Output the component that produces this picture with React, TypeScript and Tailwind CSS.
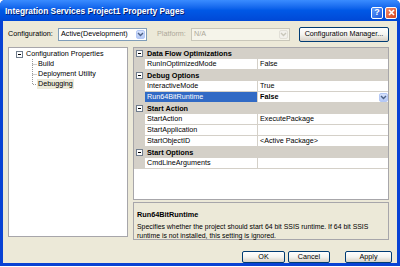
import React from "react";

const font = "font-['Liberation_Sans',Arial,sans-serif]";

function Chevron({ color = "#4D6185" }: { color?: string }) {
  return (
    <svg width="7" height="5" viewBox="0 0 7 5">
      <path d="M1 1 L3.5 3.5 L6 1" fill="none" stroke={color} strokeWidth="1.4" />
    </svg>
  );
}

function ComboArrow({ disabled = false }: { disabled?: boolean }) {
  return (
    <div
      className={
        "w-[9px] h-full flex items-center justify-center rounded-[2px] border " +
        (disabled
          ? "bg-[#F2F1EC] border-[#E2E0D8]"
          : "bg-gradient-to-b from-[#D8E3FC] to-[#B4C8F6] border-[#B4C8F6]")
      }
    >
      <Chevron color={disabled ? "#C9C7BA" : "#4D6185"} />
    </div>
  );
}

function XPButton({ children, w }: { children: React.ReactNode; w: string }) {
  return (
    <div
      className={
        w +
        " shrink-0 h-full flex items-center justify-center rounded-[2px] border border-[#003C74] bg-gradient-to-b from-[#FFFFFF] via-[#F4F4F0] to-[#D6D0C5] text-black"
      }
    >
      {children}
    </div>
  );
}

function MinusBox() {
  return (
    <svg width="7" height="7" viewBox="0 0 7 7" className="shrink-0">
      <rect x="0.5" y="0.5" width="6" height="6" fill="#fff" stroke="#6F7C8C" />
      <path d="M2 3.5 H5" stroke="#000" strokeWidth="1" />
    </svg>
  );
}

function TreeConnector({ last = false }: { last?: boolean }) {
  return (
    <svg width="5" height="10" viewBox="0 0 5 10" className="shrink-0">
      <path
        d={last ? "M0.5 0 V5.5 H5" : "M0.5 0 V10 M0.5 5.5 H5"}
        fill="none"
        stroke="#9A9A9A"
        strokeDasharray="1 1"
      />
    </svg>
  );
}

function CategoryRow({ label }: { label: string }) {
  return (
    <div className="h-[11px] flex items-center bg-[#D4D0C8]">
      <div className="w-[11px] flex justify-center">
        <MinusBox />
      </div>
      <span className="pl-[2px] font-bold text-[7.3px] text-black">{label}</span>
    </div>
  );
}

function PropRow({
  name,
  value,
  selected = false,
}: {
  name: string;
  value: string;
  selected?: boolean;
}) {
  return (
    <div className="h-[11px] flex">
      <div className="w-[11px] bg-[#D4D0C8]" />
      <div
        className={
          "w-[113px] flex items-center pl-[2px] border-r border-b border-[#D4D0C8] " +
          (selected ? "bg-[#316AC5] text-white" : "bg-white text-black")
        }
      >
        {name}
      </div>
      <div
        className={
          "flex-1 flex items-center justify-between pl-[2px] border-b border-[#D4D0C8] bg-white " +
          (selected ? "font-bold" : "")
        }
      >
        <span>{value}</span>
        {selected && (
          <div className="w-[8px] h-[9px] mr-[1px]">
            <ComboArrow />
          </div>
        )}
      </div>
    </div>
  );
}

export default function App() {
  return (
    <div className={"w-[400px] h-[267px] bg-white overflow-hidden text-[7.2px] leading-none " + font}>
      <div className="h-[266px] flex flex-col bg-[#0842D4] rounded-t-[5px]">
        {/* Title bar */}
        <div className="h-[21px] shrink-0 flex items-center pl-[5px] pr-[3px] rounded-t-[5px] bg-gradient-to-b from-[#3A8CFF] via-[#0058E6] to-[#0048D6]">
          <span className="font-bold text-[8.4px] text-white pt-[1px] [text-shadow:1px_1px_0_#0A1E6E]">
            Integration Services Project1 Property Pages
          </span>
          <div className="ml-auto flex gap-[2px] pt-[4px]">
            <div className="w-[12px] h-[12px] rounded-[2px] border border-white bg-gradient-to-br from-[#5E9BFF] to-[#1C55D8] flex items-center justify-center text-white font-bold text-[9px]">
              ?
            </div>
            <div className="w-[12px] h-[12px] rounded-[2px] border border-white bg-gradient-to-br from-[#F08A6A] to-[#D5421A] flex items-center justify-center">
              <svg width="7" height="7" viewBox="0 0 7 7">
                <path d="M1 1 L6 6 M6 1 L1 6" stroke="#fff" strokeWidth="1.6" />
              </svg>
            </div>
          </div>
        </div>

        {/* Body */}
        <div className="flex-1 mx-[3px] mb-[3px] bg-[#ECE9D8] flex flex-col pl-[5px] pt-[6px]">
          {/* Config row */}
          <div className="h-[14px] flex items-center">
            <span className="w-[50px] text-black">Configuration:</span>
            <div className="w-[89px] h-[13px] flex items-center bg-white border border-[#7F9DB9] pl-[2px] pr-[1px] py-[1px]">
              <span className="flex-1 text-black">Active(Development)</span>
              <ComboArrow />
            </div>
            <span className="ml-[10px] w-[34px] text-[#ACA899]">Platform:</span>
            <div className="w-[99px] h-[13px] flex items-center bg-[#F5F4EA] border border-[#C9C7BA] pl-[2px] pr-[1px] py-[1px]">
              <span className="flex-1 text-[#ACA899]">N/A</span>
              <ComboArrow disabled />
            </div>
            <div className="ml-[9px] h-[15px]">
              <XPButton w="w-[90px]">Configuration Manager...</XPButton>
            </div>
          </div>

          {/* Main */}
          <div className="mt-[6px] flex gap-[5px] h-[193px]">
            {/* Tree */}
            <div className="w-[120px] h-[190px] bg-white border border-[#A7A6AA] pt-[1px] text-black">
              <div className="h-[10px] flex items-center pl-[7px] gap-[3px]">
                <MinusBox />
                <span>Configuration Properties</span>
              </div>
              {["Build", "Deployment Utility", "Debugging"].map((t, i) => (
                <div key={t} className="h-[10px] flex items-center pl-[23px]">
                  <TreeConnector last={i === 2} />
                  <span
                    className={
                      "px-[1px] py-[1px] " + (i === 2 ? "bg-[#ECE9D8]" : "")
                    }
                  >
                    {t}
                  </span>
                </div>
              ))}
            </div>

            {/* Right column */}
            <div className="w-[256px] flex flex-col gap-[2px]">
              <div className="h-[153px] bg-white border border-[#A7A6AA] flex flex-col text-black">
                <CategoryRow label="Data Flow Optimizations" />
                <PropRow name="RunInOptimizedMode" value="False" />
                <CategoryRow label="Debug Options" />
                <PropRow name="InteractiveMode" value="True" />
                <PropRow name="Run64BitRuntime" value="False" selected />
                <CategoryRow label="Start Action" />
                <PropRow name="StartAction" value="ExecutePackage" />
                <PropRow name="StartApplication" value="" />
                <PropRow name="StartObjectID" value="<Active Package>" />
                <CategoryRow label="Start Options" />
                <PropRow name="CmdLineArguments" value="" />
              </div>
              <div className="h-[38px] bg-[#ECE9D8] border border-[#A7A6AA] px-[3px] pt-[8px] text-black">
                <div className="font-bold text-[7.3px]">Run64BitRuntime</div>
                <div className="mt-[4px] leading-[9px] text-[6.9px]">
                  Specifies whether the project should start 64 bit SSIS runtime. If 64 bit SSIS
                  <br />
                  runtime is not installed, this setting is ignored.
                </div>
              </div>
            </div>
          </div>

          {/* Buttons */}
          <div className="mt-[11px] h-[12px] flex pl-[234px]">
            <XPButton w="w-[43px]">OK</XPButton>
            <div className="w-[3px] shrink-0" />
            <XPButton w="w-[42px]">Cancel</XPButton>
            <div className="w-[15px] shrink-0" />
            <XPButton w="w-[47px]">Apply</XPButton>
          </div>
        </div>
      </div>
    </div>
  );
}
